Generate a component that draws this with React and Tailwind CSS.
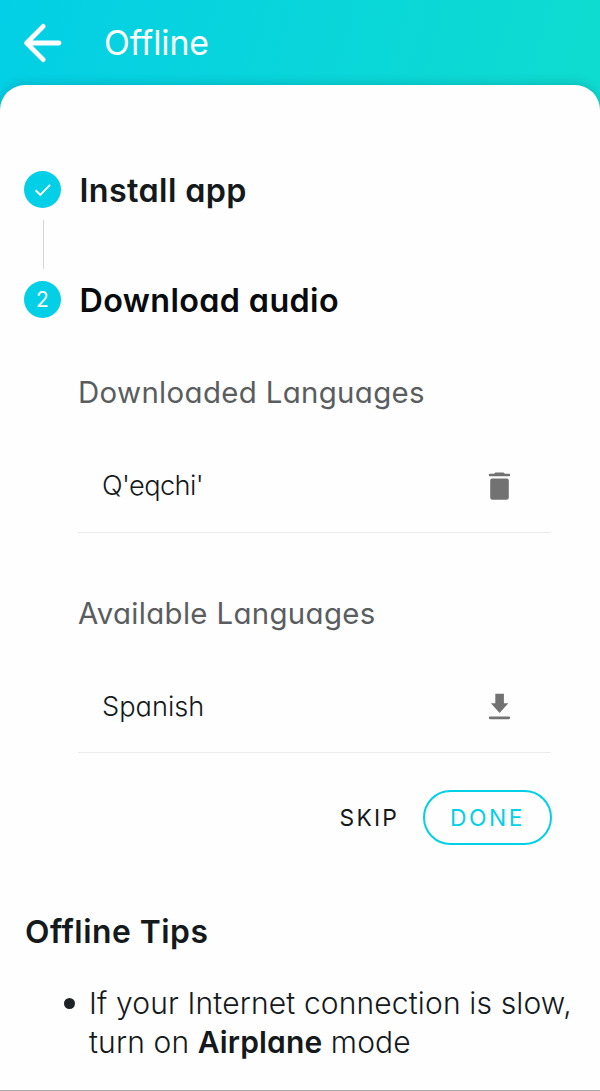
import React from 'react';

function BackArrow() {
  return (
    <svg width="40" height="42" viewBox="0 0 40 42" fill="none" stroke="#fff" strokeWidth="4.8" strokeLinecap="round" strokeLinejoin="round" aria-hidden="true">
      <path d="M21.2 4.4 4.6 21 21.2 37.6M5 21H37" />
    </svg>
  );
}

function Divider() {
  return <div className="h-px bg-[#ebebeb]" />;
}

function Step({ badge, title }) {
  return (
    <div className="flex h-[37px] items-start">
      <div className="flex size-[37px] shrink-0 items-center justify-center rounded-full bg-[#03cfe6] text-[21px] leading-none text-white">
        {badge}
      </div>
      <h2 className="ml-[18.5px] text-[32.3px] leading-[39px] font-semibold tracking-[0.38px]">{title}</h2>
    </div>
  );
}

export default function App() {
  return (
    <div className="flex h-[1091px] w-[600px] flex-col overflow-hidden bg-[linear-gradient(105deg,#03cfe6_0%,#0fdccf_100%)] bg-[length:600px_120px] bg-no-repeat font-['Inter','Noto_Sans',sans-serif] text-[#14191c] [font-feature-settings:'cv11']">
      <header className="flex h-[85px] shrink-0 items-center pl-[22px] text-white">
        <BackArrow />
        <h1 className="ml-[42px] text-[33.8px] leading-[40px] font-normal tracking-[-0.1px]">Offline</h1>
      </header>

      <main className="flex flex-1 flex-col rounded-t-[25px] border-b border-[#aaa] bg-[#fefefe] shadow-[0_-2px_10px_rgba(0,90,110,0.24)]">
        <section className="pt-[86px] pl-[24px]">
          <Step
            badge={
              <svg width="18" height="14" viewBox="0 0 18 14" fill="none" stroke="#fff" strokeWidth="1.9" aria-hidden="true">
                <path d="M1.6 7.2 6.3 11.8 16 1.8" />
              </svg>
            }
            title="Install app"
          />
          <div className="mt-[12px] ml-[19px] h-[49px] w-px bg-[#d6d6d6]" />
          <div className="mt-[12px] text-[#080b0d]">
            <Step badge="2" title="Download audio" />
          </div>
        </section>

        <section className="mr-[49px] ml-[78px] pt-[55px]">
          <h3 className="h-[40px] text-[29.4px] leading-[40px] tracking-[0.35px] text-[#5a5d5f]">Downloaded Languages</h3>
          <div className="mt-[27px] flex h-[92px] items-center justify-between pr-[40px] pl-[24px]">
            <span className="text-[27.2px] leading-[40px] font-light tracking-[-0.6px]">Q'eqchi'</span>
            <svg width="23" height="28" viewBox="0 0 23 28" fill="#727272" aria-hidden="true">
              <path d="M6 1.8 7.5.4h8L17 1.8h4.2Q22.2 1.8 22.2 3T21.2 4.2H1.8Q.8 4.2.8 3T1.8 1.8ZM2.2 8.6Q2.2 6.6 4.2 6.6H18.8Q20.8 6.6 20.8 8.6V25.5Q20.8 27.8 18.5 27.8H4.5Q2.2 27.8 2.2 25.5Z" />
            </svg>
          </div>
          <Divider />
          <h3 className="mt-[61px] h-[40px] text-[29.4px] leading-[40px] tracking-[0.35px] text-[#5a5d5f]">Available Languages</h3>
          <div className="mt-[27px] flex h-[91px] items-center justify-between pr-[40px] pl-[24px]">
            <span className="text-[27.2px] leading-[40px] font-light tracking-[0px]">Spanish</span>
            <svg width="23" height="28" viewBox="0 0 23 28" fill="#727272" aria-hidden="true">
              <path d="M7.3.8h8.6v9.4h4.4L11.6 20 2.9 10.2h4.4ZM2.2 23.4H20.8Q22.2 23.4 22.2 24.8T20.8 26.2H2.2Q.8 26.2.8 24.8T2.2 23.4Z" />
            </svg>
          </div>
          <Divider />
          <div className="-mr-px mt-[37px] flex h-[55px] items-center justify-end">
            <button className="mr-[24px] text-[22.8px] leading-[30px] tracking-[2.2px]">SKIP</button>
            <button className="flex h-[55px] w-[129px] items-center justify-center rounded-full border-2 border-[#03cfe6] text-[22.8px] leading-[30px] tracking-[2.6px] text-[#03cfe6]">DONE</button>
          </div>
        </section>

        <section className="pt-[67px] pl-[25px]">
          <h2 className="h-[40px] text-[31.8px] leading-[40px] font-semibold tracking-[0.5px]">Offline Tips</h2>
          <ul className="mt-[32px]">
            <li className="flex pl-[39px] text-[30px] leading-[38.5px] font-light tracking-[0.14px]">
              <span className="mt-[14px] mr-[14px] size-[11px] shrink-0 rounded-full bg-[#1c2226]" />
              <span className="whitespace-nowrap">
                If your Internet connection is slow,
                <br />
                turn on <strong className="font-semibold">Airplane</strong> mode
              </span>
            </li>
          </ul>
        </section>
      </main>
    </div>
  );
}
